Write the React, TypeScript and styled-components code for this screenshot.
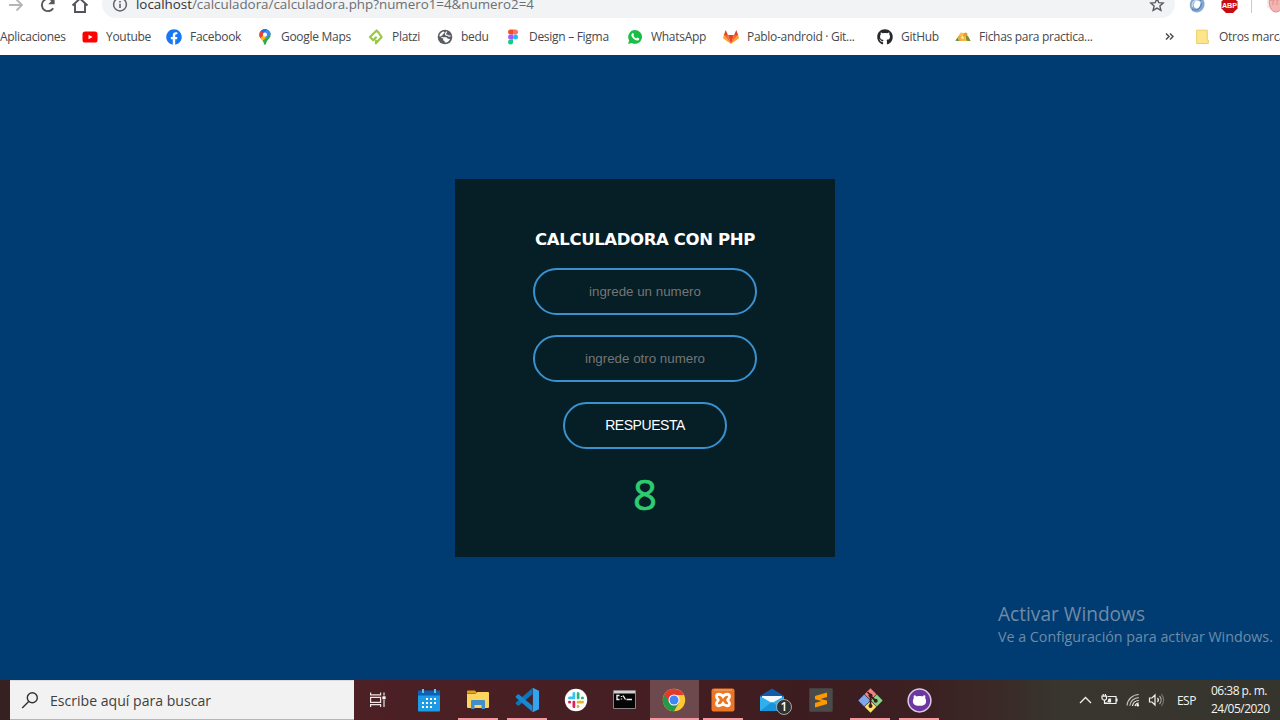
import React from "react";
import styled, { createGlobalStyle } from "styled-components";
import { FaGithub, FaFacebook } from "react-icons/fa";

const GlobalStyle = createGlobalStyle`
  * { box-sizing: border-box; }
  body {
    margin: 0;
    overflow: hidden;
    font-family: "Open Sans", "Noto Sans", sans-serif;
  }
  svg { display: block; flex: none; }
`;

const Screen = styled.div`
  width: 1280px;
  height: 720px;
  display: flex;
  flex-direction: column;
  overflow: hidden;
  background: #003c72;
`;

/* ---------- browser chrome ---------- */

const Toolbar = styled.div`
  height: 18px;
  flex: none;
  display: flex;
  align-items: flex-end;
  overflow: hidden;
  background: #fff;
  padding-left: 7px;
`;

const NavButtons = styled.div`
  height: 26px;
  width: 95px;
  flex: none;
  display: flex;
  align-items: center;
  gap: 14px;
`;

const AddressBar = styled.div`
  width: 1073px;
  height: 28px;
  flex: none;
  display: flex;
  align-items: center;
  padding: 0 10px;
  border-radius: 14px;
  background: #f1f3f4;
`;

const Url = styled.span`
  flex: 1;
  margin-left: 8px;
  font-size: 13.36px;
  line-height: 28px;
  white-space: nowrap;
  color: #6b6f73;
`;

const UrlHost = styled.span`
  color: #2f3235;
`;

const Extensions = styled.div`
  height: 26px;
  flex: none;
  display: flex;
  align-items: center;
  padding-left: 14px;
`;

const AbpSlot = styled.div`
  margin-left: 16px;
`;

const ExtensionDivider = styled.div`
  width: 1px;
  height: 16px;
  margin: 0 14px 0 13px;
  background: #c9cbce;
`;

const BookmarksBar = styled.div`
  height: 37px;
  flex: none;
  display: flex;
  align-items: center;
  background: #fff;
`;

const Bookmark = styled.div<{ $width: number; $gap?: number }>`
  width: ${(p) => p.$width}px;
  flex: none;
  display: flex;
  align-items: center;
  gap: ${(p) => p.$gap ?? 8}px;
  font-size: 12px;
  letter-spacing: -0.29px;
  line-height: 16px;
  white-space: nowrap;
  color: #46494d;
`;

const BookmarkLabel = styled.span`
  line-height: 16px;
`;

const Divider = styled.div`
  width: 1px;
  height: 16px;
  margin: 0 12px 0 10px;
  background: #c9ccd0;
`;

/* ---------- page ---------- */

const Page = styled.main`
  height: 625px;
  flex: none;
  display: flex;
  flex-direction: column;
  padding-top: 124px;
  background: #003c72;
`;

const Card = styled.form`
  width: 380px;
  height: 378px;
  flex: none;
  margin-left: 455px;
  padding-top: 51px;
  display: flex;
  flex-direction: column;
  align-items: center;
  background: #061e26;
`;

const Title = styled.h1`
  margin: 0 0 18px;
  font: bold 16.5px/20px "DejaVu Sans", sans-serif;
  letter-spacing: -0.37px;
  white-space: nowrap;
  color: #fff;
`;

const NumberInput = styled.input`
  width: 224px;
  height: 47px;
  margin: 0 0 20px;
  padding: 0;
  border: 2px solid #3a91cf;
  border-radius: 24px;
  outline: none;
  background: none;
  text-align: center;
  font: 13.333px "Liberation Sans", sans-serif;
  color: #fff;
  &::placeholder { color: #757575; opacity: 1; }
`;

const SubmitButton = styled.button`
  width: 164px;
  height: 47px;
  padding: 0 0 1px;
  border: 2px solid #3a91cf;
  border-radius: 24px;
  background: none;
  font: 14px "Liberation Sans", sans-serif;
  letter-spacing: -0.45px;
  color: #fff;
`;

const Result = styled.output`
  margin-top: 16px;
  font-size: 42px;
  line-height: 58px;
  color: #2ecc71;
  -webkit-text-stroke: 0.7px #2ecc71;
`;

const Watermark = styled.aside`
  margin: 43px 0 0 998px;
  color: #6f8ba6;
  white-space: nowrap;
`;

const WatermarkTitle = styled.div`
  font-size: 19.1px;
  line-height: 28px;
`;

const WatermarkText = styled.div`
  font-size: 14.28px;
  line-height: 18px;
`;

/* ---------- taskbar ---------- */

const Taskbar = styled.footer`
  height: 40px;
  flex: none;
  display: flex;
  background: linear-gradient(90deg, #362021 0, #4c2024 354px, #451f23 620px, #3d1c20 800px, #3b2022 930px, #3a2a27 1000px, #38362f 1060px, #36352d 1280px);
`;

const SearchBox = styled.div`
  width: 344px;
  height: 40px;
  flex: none;
  margin-left: 10px;
  padding-left: 11px;
  display: flex;
  align-items: center;
  gap: 11px;
  border-top: 1px solid #dcdcdc;
  border-bottom: 1px solid #b9b4b4;
  background: #f2f2f2;
  font-size: 14.08px;
  color: #404040;
`;

const Slot = styled.div<{ $state?: "open" | "active"; $width?: number }>`
  width: ${(p) => p.$width ?? 49}px;
  height: 40px;
  flex: none;
  display: flex;
  align-items: center;
  justify-content: center;
  background:
    ${(p) => (p.$state ? `linear-gradient(#f29aa0, #f29aa0) center bottom / ${p.$state === "active" ? 49 : 40}px 2px no-repeat` : "none")}
    ${(p) => (p.$state === "active" ? ", #6d484c" : "")};
`;

const TaskViewSlot = styled(Slot)`
  padding-right: 3px;
`;

const Tray = styled.div`
  margin-left: auto;
  display: flex;
  align-items: center;
  font-size: 12px;
  letter-spacing: -0.45px;
  color: #f4f4f2;
`;

const TrayIcons = styled.div`
  display: flex;
  align-items: center;
  gap: 8px;
  margin-right: 11px;
`;

const Clock = styled.div`
  width: 69px;
  margin-left: 15px;
  font-size: 12px;
  letter-spacing: -0.52px;
  line-height: 18px;
  white-space: nowrap;
`;

/* ---------- icons ---------- */

const ForwardIcon = () => (
  <svg width="18" height="18" viewBox="0 0 18 18" fill="none" stroke="#b4b6b9" strokeWidth="1.8">
    <path d="M2 9h13M9.500 3.500 15 9l-5.500 5.500" />
  </svg>
);

const ReloadIcon = () => (
  <svg width="18" height="18" viewBox="0 0 18 18">
    <path d="M14.200 12.200A6.100 6.100 0 1 1 13.500 4.900" fill="none" stroke="#55585c" strokeWidth="1.900" />
    <path d="M15.600 1.800v6.400H9.200z" fill="#55585c" />
  </svg>
);

const HomeIcon = () => (
  <svg width="18" height="18" viewBox="0 0 18 18" fill="none" stroke="#505357" strokeWidth="1.900">
    <path d="M1.500 9.500 9 2.600l7.500 6.900M4 8v8h10V8" />
  </svg>
);

const InfoIcon = () => (
  <svg width="16" height="16" viewBox="0 0 16 16">
    <circle cx="8" cy="8.500" r="6.400" fill="none" stroke="#5f6368" strokeWidth="1.500" />
    <path d="M8 7.700v4.300M8 4.900v1.600" stroke="#5f6368" strokeWidth="1.600" />
  </svg>
);

const StarIcon = () => (
  <svg width="16" height="16" viewBox="0 0 16 16">
    <path d="m8 2.600 1.800 4.100 4.400.4-3.300 3 1 4.300L8 12.100l-3.900 2.300 1-4.300-3.300-3 4.400-.4z" fill="none" stroke="#55595d" strokeWidth="1.400" />
  </svg>
);

const SwirlIcon = () => (
  <svg width="16" height="18" viewBox="0 0 16 18">
    <ellipse cx="8" cy="8.500" rx="5.300" ry="6" fill="none" stroke="#86a9d2" strokeWidth="4" transform="rotate(20 8 9)" />
    <path d="M3 13c4 2.500 9 0 9.500-6M4 6c2-4 6-4 8-1" fill="none" stroke="#5783b3" strokeWidth="1.200" />
    <path d="M3.500 11C2.500 7 5 4 8 4" fill="none" stroke="#c7daec" strokeWidth="1.400" />
  </svg>
);

const AbpIcon = () => (
  <svg width="17" height="17" viewBox="0 0 17 17">
    <path d="M5 0h7L16.500 4.500v7L12 16H5L.5 11.500v-7z" fill="#c70d12" />
    <text x="8.500" y="10.500" textAnchor="middle" fontFamily="Liberation Sans, sans-serif" fontWeight="bold" fontSize="7.200" fill="#fff">ABP</text>
  </svg>
);

const HandIcon = () => (
  <svg width="18" height="18" viewBox="0 0 18 18">
    <path d="M3 5c0-1 2-1 2 0V2h2v2h2V1h2v3h2V2h2v9c0 3-2 5-5 5s-5-2-6-5z" fill="#f3b5b2" stroke="#db908d" strokeWidth="1" />
    <path d="M7 4v5M11 4v5" stroke="#dc8d8a" />
    <path d="M2 3v9" stroke="#e5dcdc" />
  </svg>
);

const YoutubeIcon = () => (
  <svg width="16" height="16" viewBox="0 0 16 16">
    <rect x=".5" y="2.500" width="15" height="11" rx="2.600" fill="#f00" />
    <path d="m6.500 5.700 4 2.300-4 2.300z" fill="#fff" />
  </svg>
);

const MapsIcon = () => (
  <svg width="16" height="16" viewBox="0 0 16 16">
    <defs>
      <clipPath id="pin">
        <path d="M8 0a5.700 5.700 0 0 0-5.700 5.700c0 2.500 1.500 3.700 3.100 5.600C6.700 12.900 7.200 16 8 16s1.300-3.100 2.600-4.700c1.600-1.900 3.100-3.100 3.100-5.600A5.700 5.700 0 0 0 8 0z" />
      </clipPath>
    </defs>
    <g clipPath="url(#pin)">
      <path fill="#34a853" d="M0 0h16v16H0z" />
      <path fill="#fbbc04" d="M0 6h6l4 2-7 6H0z" />
      <path fill="#4285f4" d="M8 0h8v3.500L9 9 6 6z" />
      <path fill="#1a73e8" d="M5 0h5L6 5 3 2z" />
      <path fill="#ea4335" d="m3.500 1.500 4 3.300L3 10 0 6z" />
    </g>
    <circle cx="8" cy="5.700" r="2.100" fill="#fff" />
  </svg>
);

const PlatziIcon = () => (
  <svg width="16" height="16" viewBox="0 0 16 16" fill="none" stroke="#98ca3f" strokeWidth="2.200" strokeLinejoin="round">
    <path d="M8.600 7.800 5.200 11.300 2 8l6.600-6.500L10.500 3.500 13.600 8 8 14.400V10.800" />
  </svg>
);

const GlobeIcon = () => (
  <svg width="16" height="16" viewBox="0 0 16 16">
    <circle cx="8" cy="8" r="7.300" fill="#5a5e63" />
    <path d="M6.800 2.400c1.600.9.700 1.800-.5 2.400-1 .5 0 1.500-1.600 2L2.300 7.300l3.500.9h3.400c1 .3 1 1.300 1.900 1.500l2 .2c-.9 2.400-2.900 3.600-5.300 3.700l-.2-1.600c-1.300-.3-1.700-1-1.300-2.200L2.300 7.300c.3-2.600 2-4.400 4.500-4.900z" fill="#fff" />
    <path d="M9.500 2.500c.2 1.200-1.500 1.800-1 3 .5 1 2 .2 2.500 1 .4.800 1.500.7 2.600.5" fill="none" stroke="#fff" strokeWidth="1.200" />
  </svg>
);

const FigmaIcon = () => (
  <svg width="16" height="16" viewBox="0 0 16 16">
    <path d="M5.500.5H8v5H5.500a2.500 2.500 0 0 1 0-5z" fill="#f24e1e" />
    <path d="M8 .5h2.500a2.500 2.500 0 0 1 0 5H8z" fill="#ff7262" />
    <path d="M5.500 5.500H8v5H5.500a2.500 2.500 0 0 1 0-5z" fill="#a259ff" />
    <circle cx="10.500" cy="8" r="2.500" fill="#1abcfe" />
    <path d="M5.500 10.500H8V13a2.500 2.500 0 1 1-2.500-2.500z" fill="#0acf83" />
  </svg>
);

const WhatsAppIcon = () => (
  <svg width="16" height="16" viewBox="0 0 16 16">
    <path d="M8.200 1a6.900 6.900 0 0 0-6 10.400L1 15l3.700-1.100A6.900 6.900 0 1 0 8.200 1z" fill="#19bf45" />
    <path d="M5.200 4.400c.7-.8 1.200-.4 1.500.5.500 1.100.3 1.200-.2 1.900.6 1.300 1.500 2.100 2.800 2.700.7-.9.900-1.100 1.500-.8 1.500.7 1.700.8 1.300 1.700-.4.800-1.400 1.400-2.900.9-2.400-.8-4.300-2.600-4.900-4.700-.2-.9.200-1.600.9-2.200z" fill="#fff" />
  </svg>
);

const GitlabIcon = () => (
  <svg width="16" height="16" viewBox="0 0 16 16">
    <path d="M8 15 5 6h6z" fill="#e24329" />
    <path d="M8 15 .8 6H5z" fill="#fc6d26" />
    <path d="M8 15 15.200 6H11z" fill="#fc6d26" />
    <path d="M.8 6 0 9.200 8 15zM15.200 6l.8 3.200L8 15z" fill="#fca326" />
    <path d="M.8 6.200 2.700 1 5 6.200zM15.200 6.200 13.300 1 11 6.200z" fill="#e24329" />
  </svg>
);

const TacoIcon = () => (
  <svg width="16" height="16" viewBox="0 0 16 16">
    <path d="M.3 11.800 4.500 6l2.500 6z" fill="#3f8a28" />
    <path d="M2.500 10c1-5 5.500-7.500 9.500-4.500L9 12H4.500z" fill="#f2a93c" />
    <circle cx="6.500" cy="5.500" r="2" fill="#f8c14a" />
    <circle cx="10.500" cy="5.500" r="2" fill="#f09a2c" />
    <path d="m11 6.500 2 .5 2.700 5H11z" fill="#77942c" />
    <path d="M5 9.500c2-3 5-3 7 2.500H7z" fill="#f6b544" />
    <circle cx="7.500" cy="8.500" r="1.200" fill="#fff0bd" />
  </svg>
);

const FolderIcon = () => (
  <svg width="14" height="16" viewBox="0 0 14 16">
    <path d="M.7 1.200h10.600V11h1v3.500H.7z" fill="#ffe58a" stroke="#e9cd66" strokeWidth="1" />
  </svg>
);

const ChevronsIcon = () => (
  <svg width="9" height="9" viewBox="0 0 9 9" fill="none" stroke="#4b4e52" strokeWidth="1.500">
    <path d="m1 1.500 3 3-3 3M5 1.500l3 3-3 3" />
  </svg>
);

const SearchIcon = () => (
  <svg width="18" height="18" viewBox="0 0 18 18" fill="none" stroke="#333" strokeWidth="1.400">
    <circle cx="11.300" cy="6.800" r="5" />
    <path d="M7.700 10.400 1.200 16.900" />
  </svg>
);

const TaskViewIcon = () => (
  <svg width="18" height="18" viewBox="0 0 18 18" fill="none" stroke="#f1e6e6" strokeWidth="1.200">
    <path d="M1.600 1.500v2.300h10V1.500M1.600 16v-2.300h10V16M1.600 6.300h10v5h-10zM15 1.500v3M15 9v7" />
    <path d="M13.400 5.300h3.200v3h-3.200z" fill="#fff" stroke="none" />
  </svg>
);

const CalendarIcon = () => (
  <svg width="24" height="25" viewBox="0 0 24 25">
    <path d="M1 7h22v15.500a1 1 0 0 1-1 1H2a1 1 0 0 1-1-1z" fill="#1d9be5" />
    <path d="M1 2.500h22V7.500H1z" fill="#0b61b6" />
    <path d="M5 1h2v4H5zM17 1h2v4h-2z" fill="#64c3f5" />
    {[10, 14, 18].map((y) =>
      [5, 9, 13, 17].map((x) =>
        (y === 10 && x === 5) || (y === 18 && x === 17) ? null : (
          <rect key={`${x}-${y}`} x={x} y={y} width="2" height="2" fill="#fff" />
        )
      )
    )}
  </svg>
);

const ExplorerIcon = () => (
  <svg width="22" height="20" viewBox="0 0 22 20">
    <path d="M0 1.500a1 1 0 0 1 1-1h7L10 3H0z" fill="#e4a01b" />
    <path d="M0 3.500h8.500L10.500 2H21a1 1 0 0 1 1 1v14a1 1 0 0 1-1 1H1a1 1 0 0 1-1-1z" fill="#fcd560" />
    <path d="M4 19v-8a1 1 0 0 1 1-1h12a1 1 0 0 1 1 1v8h-3.500v-4h-7v4z" fill="#408fc9" />
  </svg>
);

const VsCodeIcon = () => (
  <svg width="24" height="24" viewBox="0 0 24 24">
    <path d="M17.500 0v6.300L4 17.500l-1 .2-2.300-2 .1-1.100z" fill="#0b75bd" />
    <path d="M17.500 24v-6.300L4 6.500l-1-.2-2.300 2 .1 1.100z" fill="#1689d2" />
    <path d="M17 .200 18.200 0 24 2.700v18.600L18.200 24l-1.200-.5c.5.200.9-.1.900-.7V1c0-.5-.4-.9-.9-.8z" fill="#35a3ee" />
  </svg>
);

const SlackIcon = () => (
  <svg width="24" height="24" viewBox="0 0 24 24">
    <circle cx="12" cy="12" r="11.200" fill="#fff" />
    <g strokeWidth="3" strokeLinecap="round">
      <path d="M10 5.500v4M5.500 10H10" stroke="#36c5f0" />
      <path d="M14 5.500V10M18.500 10h-.2" stroke="#2eb67d" />
      <path d="M14 14h4.500M14 18.500v-.2" stroke="#ecb22e" />
      <path d="M10 14v4.500M5.500 14h.2" stroke="#e01e5a" />
    </g>
    <path d="M12 4v16M4 12h16" stroke="#fff" strokeWidth="1" />
  </svg>
);

const TerminalIcon = () => (
  <svg width="25" height="20" viewBox="0 0 25 20">
    <path d="M.5.5h22v18H.5z" fill="#050505" stroke="#8b8588" />
    <path d="M1 1h21v2.500H1z" fill="#d2d2d2" />
    <path d="M6.500 5.500H4v4h2.500M8.500 6v1M8.500 8.500v1M10 5.500l2.500 4M13.500 9.500H19" fill="none" stroke="#f0f0f0" strokeWidth="1.400" />
  </svg>
);

const ChromeIcon = () => (
  <svg width="24" height="24" viewBox="0 0 24 24">
    <circle cx="12" cy="12" r="11.200" fill="#fcc934" />
    <path d="M12 12 2.300 6.400A11.200 11.200 0 0 0 12 23.200l5-8.600z" fill="#25994a" />
    <path d="M12 7h9.900A11.200 11.200 0 0 0 2.300 6.400L7.500 14.800 12 12z" fill="#e1392d" />
    <circle cx="12" cy="12" r="5.500" fill="#fff" />
    <circle cx="12" cy="12" r="4.500" fill="#4285f4" />
  </svg>
);

const XamppIcon = () => (
  <svg width="24" height="24" viewBox="0 0 24 24">
    <rect x=".5" y=".5" width="23" height="23" rx="2" fill="#ed7625" />
    <path d="M3 2h18" stroke="#f7ab79" strokeWidth="1" />
    <path d="M5.500 8.500C5.500 5.500 10 5.500 12 8.500c2-3 6.500-3 6.500 0 0 2-1.800 2.500-1.800 3.500s1.800 1.500 1.800 3.500c0 3-4.500 3-6.500 0-2 3-6.500 3-6.500 0 0-2 1.800-2.500 1.800-3.500S5.500 10.500 5.500 8.500z" fill="none" stroke="#fff" strokeWidth="2.800" />
  </svg>
);

const MailBox = styled.div`
  position: relative;
  width: 26px;
  height: 24px;
`;

const MailBadge = styled.span`
  position: absolute;
  left: 17px;
  top: 11px;
  width: 16px;
  height: 16px;
  border: 1px solid #a7a9aa;
  border-radius: 50%;
  background: #303234;
  text-align: center;
  font-size: 12px;
  font-weight: 600;
  line-height: 14px;
  color: #fff;
`;

const MailIcon = () => (
  <MailBox>
    <svg width="26" height="24" viewBox="0 0 26 24">
      <path d="M1 8 13 .500 25 8v4H1z" fill="#0e5cab" />
      <path d="M3 8h20v6l-10 5L3 14z" fill="#f3f7fa" />
      <path d="M1 8.200 13 15l12-6.800V23H1z" fill="#2fb0ed" />
      <path d="m1 23 12-9 12 9z" fill="#1795dc" />
    </svg>
    <MailBadge>1</MailBadge>
  </MailBox>
);

const SublimeIcon = () => (
  <svg width="24" height="24" viewBox="0 0 24 24">
    <rect x=".3" y=".3" width="23.400" height="23.400" rx="1" fill="#4b4a4a" />
    <path d="M18 4.600 6 7.900v3.300l6.500 1.700L6 14.900v4.500l12-3.300v-3.500l-6.500-1.700 6.500-2z" fill="#ff9800" />
  </svg>
);

const GitIcon = () => (
  <svg width="25" height="25" viewBox="0 0 25 25">
    <path d="m12.500.3 5.900 5.900-5.900 5.900-5.900-5.900z" fill="#f0857f" />
    <path d="m6.200 6.600 5.900 5.900-5.900 5.900-5.900-5.900z" fill="#7da7ef" />
    <path d="m18.800 6.600 5.900 5.900-5.900 5.900-5.900-5.900z" fill="#88d487" />
    <path d="m12.500 12.900 5.900 5.900-5.900 5.900-5.900-5.900z" fill="#fbdf6d" />
    <path d="M9.500 4 12.500 7v12M12.500 8l5.500 5" fill="none" stroke="#33201f" strokeWidth="1.700" />
    <g fill="#33201f">
      <circle cx="12.500" cy="7.500" r="2" />
      <circle cx="17.700" cy="12.700" r="2" />
      <circle cx="12.500" cy="18" r="2" />
    </g>
  </svg>
);

const GithubDesktopIcon = () => (
  <svg width="25" height="25" viewBox="0 0 25 25">
    <circle cx="12.500" cy="12.500" r="11.400" fill="#6e36a0" stroke="#d9cbe4" strokeWidth="1.500" />
    <path d="M7 7.200c1 0 2 .5 2.800 1.200 1.800-.4 3.600-.4 5.400 0C16 7.700 17 7.200 18 7.200c.5 1 .5 2 .2 3 1 1.300 1.200 3.300.5 5-.8 2-3 2.500-6.200 2.500s-5.400-.5-6.200-2.500c-.7-1.700-.5-3.700.5-5-.3-1-.3-2 .2-3z" fill="#fff" />
  </svg>
);

const TrayChevron = () => (
  <svg width="14" height="14" viewBox="0 0 14 14" fill="none" stroke="#ececea" strokeWidth="1.400">
    <path d="M1 10 6.500 4.500 12 10" />
  </svg>
);

const BatteryIcon = () => (
  <svg width="17" height="14" viewBox="0 0 17 14" fill="none" stroke="#f0f0ee" strokeWidth="1.200">
    <path d="M6.500 3.500H15v7H5V9M16 5.500v3" />
    <path d="M1 3.200h4.500v2.600L4.500 7h-2L1 5.800zM2.200 1v2M4.400 1v2M3.500 7v3.500H5" />
    <path d="M8 6h1.500v3H7z" fill="#f0f0ee" />
  </svg>
);

const WifiIcon = () => (
  <svg width="14" height="14" viewBox="0 0 14 14" fill="none" strokeWidth="1.200">
    <path d="M1 12.500A12 12 0 0 1 12.800 1.500M3.800 12.800a9 9 0 0 1 9-8.200" stroke="#c0c0ba" />
    <path d="M6.500 13a6.300 6.300 0 0 1 6.300-5.500M9 13a4 4 0 0 1 3.800-3" stroke="#f0f0ee" />
    <circle cx="11.800" cy="12.300" r="1.200" fill="#fff" />
  </svg>
);

const VolumeIcon = () => (
  <svg width="18" height="14" viewBox="0 0 18 14" fill="none" strokeWidth="1.200">
    <path d="M1.500 5v4H4l3 3V2L4 5zM9.500 5a3 3 0 0 1 0 4" stroke="#f0f0ee" />
    <path d="M11.500 3a6 6 0 0 1 0 8" stroke="#b0b0aa" />
    <path d="M13.500 1.200a9 9 0 0 1 0 11.600" stroke="#74746c" />
  </svg>
);

const bookmarks = [
  { label: "Youtube", icon: <YoutubeIcon />, width: 84 },
  { label: "Facebook", icon: <FaFacebook size={16} color="#1877f2" />, width: 91 },
  { label: "Google Maps", icon: <MapsIcon />, width: 111 },
  { label: "Platzi", icon: <PlatziIcon />, width: 69 },
  { label: "bedu", icon: <GlobeIcon />, width: 68 },
  { label: "Design – Figma", icon: <FigmaIcon />, width: 122 },
  { label: "WhatsApp", icon: <WhatsAppIcon />, width: 96 },
  { label: "Pablo-android · Git...", icon: <GitlabIcon />, width: 154 },
  { label: "GitHub", icon: <FaGithub size={16} color="#24292e" />, width: 78 },
  { label: "Fichas para practica...", icon: <TacoIcon />, width: 210 },
];

const apps: { name: string; icon: React.ReactNode; state?: "open" | "active" }[] = [
  { name: "calendar", icon: <CalendarIcon /> },
  { name: "explorer", icon: <ExplorerIcon />, state: "open" },
  { name: "vscode", icon: <VsCodeIcon />, state: "open" },
  { name: "slack", icon: <SlackIcon /> },
  { name: "terminal", icon: <TerminalIcon /> },
  { name: "chrome", icon: <ChromeIcon />, state: "active" },
  { name: "xampp", icon: <XamppIcon />, state: "open" },
  { name: "mail", icon: <MailIcon /> },
  { name: "sublime", icon: <SublimeIcon /> },
  { name: "git", icon: <GitIcon />, state: "open" },
  { name: "github", icon: <GithubDesktopIcon />, state: "open" },
];

export default function App() {
  return (
    <Screen>
      <GlobalStyle />
      <Toolbar>
        <NavButtons>
          <ForwardIcon />
          <ReloadIcon />
          <HomeIcon />
        </NavButtons>
        <AddressBar>
          <InfoIcon />
          <Url>
            <UrlHost>localhost</UrlHost>/calculadora/calculadora.php?numero1=4&amp;numero2=4
          </Url>
          <StarIcon />
        </AddressBar>
        <Extensions>
          <SwirlIcon />
          <AbpSlot>
            <AbpIcon />
          </AbpSlot>
          <ExtensionDivider />
          <HandIcon />
        </Extensions>
      </Toolbar>
      <BookmarksBar>
        <Bookmark $width={82}>
          <BookmarkLabel>Aplicaciones</BookmarkLabel>
        </Bookmark>
        {bookmarks.map((b) => (
          <Bookmark key={b.label} $width={b.width}>
            {b.icon}
            <BookmarkLabel>{b.label}</BookmarkLabel>
          </Bookmark>
        ))}
        <ChevronsIcon />
        <Divider />
        <Bookmark $width={110} $gap={9}>
          <FolderIcon />
          <BookmarkLabel>Otros marcadores</BookmarkLabel>
        </Bookmark>
      </BookmarksBar>

      <Page>
        <Card onSubmit={(e) => e.preventDefault()}>
          <Title>CALCULADORA CON PHP</Title>
          <NumberInput placeholder="ingrede un numero" />
          <NumberInput placeholder="ingrede otro numero" />
          <SubmitButton>RESPUESTA</SubmitButton>
          <Result>8</Result>
        </Card>
        <Watermark>
          <WatermarkTitle>Activar Windows</WatermarkTitle>
          <WatermarkText>Ve a Configuración para activar Windows.</WatermarkText>
        </Watermark>
      </Page>

      <Taskbar>
        <SearchBox>
          <SearchIcon />
          Escribe aquí para buscar
        </SearchBox>
        <TaskViewSlot $width={50.5}>
          <TaskViewIcon />
        </TaskViewSlot>
        {apps.map((a) => (
          <Slot key={a.name} $state={a.state}>
            {a.icon}
          </Slot>
        ))}
        <Tray>
          <TrayIcons>
            <TrayChevron />
            <BatteryIcon />
            <WifiIcon />
            <VolumeIcon />
          </TrayIcons>
          ESP
          <Clock>
            06:38 p. m.
            <br />
            24/05/2020
          </Clock>
        </Tray>
      </Taskbar>
    </Screen>
  );
}
